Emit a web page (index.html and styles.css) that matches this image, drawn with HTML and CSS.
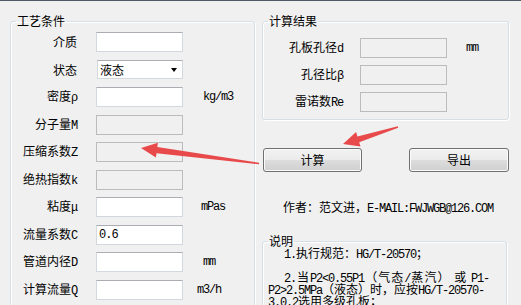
FILE: index.html
```html
<!DOCTYPE html>
<html lang="zh">
<head>
<meta charset="utf-8">
<title>孔板计算</title>
<link rel="stylesheet" href="styles.css">
</head>
<body>
<div class="topline"></div>
<div class="window">
  <fieldset class="group group-input">
    <legend>工艺条件</legend>
    <div class="form form-input">
      <label class="lbl">介质</label><input class="field" type="text"><span class="unit"></span>
      <label class="lbl">状态</label><div class="combo"><span>液态</span><span class="caret"></span></div><span class="unit"></span>
      <label class="lbl">密度<span class="en">ρ</span></label><input class="field" type="text"><span class="unit u-kg en">kg/m3</span>
      <label class="lbl">分子量<span class="en">M</span></label><input class="field" type="text" disabled><span class="unit"></span>
      <label class="lbl">压缩系数<span class="en">Z</span></label><input class="field" type="text" disabled><span class="unit"></span>
      <label class="lbl">绝热指数<span class="en">k</span></label><input class="field" type="text" disabled><span class="unit"></span>
      <label class="lbl">粘度<span class="en">μ</span></label><input class="field" type="text"><span class="unit u-mpas en">mPas</span>
      <label class="lbl">流量系数<span class="en">C</span></label><input class="field num" type="text" value="0.6"><span class="unit"></span>
      <label class="lbl">管道内径<span class="en">D</span></label><input class="field" type="text"><span class="unit u-mm en">mm</span>
      <label class="lbl">计算流量<span class="en">Q</span></label><input class="field" type="text"><span class="unit u-m3h en">m3/h</span>
    </div>
  </fieldset>

  <div class="right">
    <fieldset class="group group-result">
      <legend>计算结果</legend>
      <div class="form form-result">
        <label class="lbl">孔板孔径<span class="en">d</span></label><input class="field" type="text" disabled><span class="unit en">mm</span>
        <label class="lbl">孔径比<span class="en">β</span></label><input class="field" type="text" disabled><span class="unit"></span>
        <label class="lbl">雷诺数<span class="en">Re</span></label><input class="field" type="text" disabled><span class="unit"></span>
      </div>
    </fieldset>

    <div class="buttons">
      <button class="btn btn-calc" type="button">计算</button>
      <button class="btn btn-export" type="button">导出</button>
    </div>

    <p class="author">作者：范文进，<span class="en">E-MAIL:FWJWGB@126.COM</span></p>

    <fieldset class="group group-note">
      <legend>说明</legend>
      <div class="note">
        <div class="line indent"><span class="en">1.</span>执行规范：<span class="en">HG/T-20570</span>；</div>
        <div class="line">&nbsp;</div>
        <div class="line indent justify"><span class="en">2.</span>当<span class="en">P2&lt;0.55P1</span>（气态<span class="en">/</span>蒸汽） 或 <span class="en">P1-</span></div>
        <div class="line"><span class="en">P2&gt;2.5MPa</span>（液态）时，应按<span class="en">HG/T-20570-</span></div>
        <div class="line"><span class="en">3.0.2</span>选用多级孔板；</div>
      </div>
    </fieldset>
  </div>
</div>

<svg class="arrows" width="521" height="305" viewBox="0 0 521 305" aria-hidden="true">
  <polygon points="259.1,162.7 157.3,146.9 157.9,142.7 141,148 155.9,157.5 156.5,153.3 258.9,164.3"/>
  <polygon points="397.8,126.2 357.4,136.4 356.1,132.1 343,144 360.5,146.5 359.2,142.2 398.2,127.8"/>
</svg>
</body>
</html>
```

FILE: styles.css
```css
* {
  box-sizing: border-box;
}

html,
body {
  margin: 0;
  padding: 0;
}

body {
  position: relative;
  width: 521px;
  height: 305px;
  overflow: hidden;
  background: #f0f0f0;
  color: #000;
  font-family: "Noto Sans CJK SC", "Noto Sans", sans-serif;
  font-size: 12px;
  line-height: 12px;
}

.en {
  font-family: "Liberation Mono", monospace;
  font-size: 12px;
  letter-spacing: -1.2px;
}

.topline {
  height: 1px;
  background: #4e5a66;
}

.window {
  display: flex;
  align-items: flex-start;
  gap: 7px;
  padding: 13px 0 0 10px;
}

/* group boxes */
.group {
  margin: 0;
  padding: 0;
  min-width: 0;
  border: 1px solid #d5dfe5;
  border-radius: 3px;
  box-shadow: inset 1px 1px 0 #fff, 1px 1px 0 #fff;
}

.group legend {
  margin-left: 5px;
  padding: 0 1px;
  font-size: 12px;
  line-height: 14px;
}

.group-input {
  width: 245px;
  height: 310px;
}

.right {
  width: 247px;
  display: flex;
  flex-direction: column;
}

.group-result {
  width: 247px;
  padding: 10px 0 7px 0;
}

.group-note {
  width: 245px;
  height: 80px;
  margin-top: 19px;
}

/* forms */
.form {
  display: grid;
  grid-auto-rows: 20px;
  align-items: center;
}

.form-input {
  grid-template-columns: 66px 87px auto;
  column-gap: 19px;
  row-gap: 7.5px;
  padding-top: 4px;
}

.form-result {
  grid-template-columns: 80px 87px auto;
  column-gap: 17px;
  row-gap: 7px;
}

.lbl {
  text-align: right;
  white-space: nowrap;
}

.field {
  width: 87px;
  height: 20px;
  margin: 0;
  padding: 0 2px;
  border: 1px solid #d3d7de;
  border-top-color: #abadb3;
  border-radius: 0;
  background: #fff;
  font: inherit;
  outline: none;
}

.field:disabled {
  background: #f0f0f0;
  border-color: #bcbcbc;
}

.field.num {
  font-family: "Liberation Mono", monospace;
  font-size: 12px;
  letter-spacing: -1px;
  color: #000;
}

.combo {
  width: 86px;
  height: 19px;
  margin-left: 1px;
  display: flex;
  align-items: center;
  justify-content: space-between;
  padding: 0 5px 0 2px;
  background: #fff;
  border: 1px solid #d3d7de;
  border-top-color: #abadb3;
}

.caret {
  width: 0;
  height: 0;
  border-top: 4px solid #000;
  border-left: 3.5px solid transparent;
  border-right: 3.5px solid transparent;
}

.unit {
  white-space: nowrap;
}

.u-kg {
  margin-left: 1px;
}

.u-mpas {
  margin-left: -1px;
}

.u-mm {
  margin-left: 1px;
}

.u-m3h {
  margin-left: -5px;
}

.form-result .unit {
  margin-left: 2px;
}

/* buttons */
.buttons {
  display: flex;
  justify-content: space-between;
  margin-top: 28px;
  padding-left: 1px;
}

.btn {
  width: 100px;
  height: 24px;
  margin: 0;
  padding: 0;
  border: 1px solid #707070;
  border-radius: 3px;
  background: linear-gradient(#f2f2f2 0%, #ebebeb 50%, #dddddd 51%, #cfcfcf 100%);
  box-shadow: inset 0 0 0 1px #fbfbfb;
  color: #000;
  font-family: "Noto Sans CJK SC", sans-serif;
  font-size: 12px;
  line-height: 12px;
}

.btn-calc {
  width: 99px;
}

/* author line */
.author {
  margin: 29px 0 0 0;
  padding-left: 21px;
  white-space: nowrap;
}

/* note */
.note {
  margin-top: -1px;
  padding-left: 5px;
  width: 226px;
}

.line {
  white-space: nowrap;
  height: 12px;
}

.line.indent {
  text-indent: 16px;
}

.line.justify {
  white-space: normal;
  text-align: justify;
  text-align-last: justify;
}

/* annotation arrows */
.arrows {
  position: absolute;
  left: 0;
  top: 0;
  pointer-events: none;
}

.arrows polygon {
  fill: #e84a4b;
}
```
